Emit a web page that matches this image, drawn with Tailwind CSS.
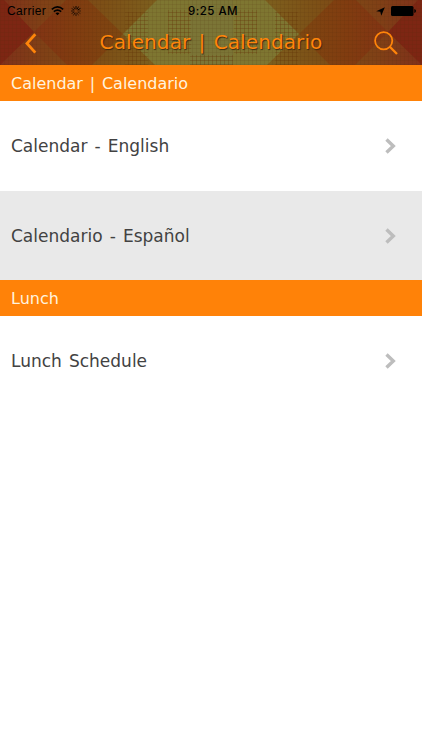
<!DOCTYPE html>
<html lang="en">
<head>
  <meta charset="UTF-8" />
  <meta name="viewport" content="width=device-width, initial-scale=1.0"/>
  <title>Calendar | Calendario</title>
  <script src="https://cdn.jsdelivr.net/npm/@tailwindcss/browser@4"></script>
</head>
<body class="bg-white min-h-screen overflow-hidden font-['DejaVu_Sans',sans-serif] text-[#424242]">
  <!-- Header -->
  <header class="relative h-[65px] overflow-hidden">
    <svg class="absolute inset-0" width="422" height="65" viewBox="0 0 422 65">
      <defs>
        <pattern id="weave" width="4" height="4" patternUnits="userSpaceOnUse">
          <path d="M0 .5H4M.5 0V4" stroke="#542c08" stroke-opacity=".1" fill="none"/>
        </pattern>
        <pattern id="grid" width="4" height="4" patternUnits="userSpaceOnUse">
          <path d="M0 .5H4M.5 0V4" stroke="#693607" stroke-opacity=".25" fill="none"/>
        </pattern>
        <linearGradient id="base">
          <stop offset="0" stop-color="#80301a"/>
          <stop offset=".1" stop-color="#804016"/>
          <stop offset=".25" stop-color="#7d5016"/>
          <stop offset=".36" stop-color="#7d5e1d"/>
          <stop offset=".5" stop-color="#7e702c"/>
          <stop offset=".64" stop-color="#7d5e1d"/>
          <stop offset=".75" stop-color="#7d5016"/>
          <stop offset=".9" stop-color="#804016"/>
          <stop offset="1" stop-color="#80301a"/>
        </linearGradient>
        <linearGradient id="left">
          <stop offset="0" stop-color="#823414"/>
          <stop offset=".45" stop-color="#813c10"/>
          <stop offset="1" stop-color="#7e4711"/>
        </linearGradient>
        <linearGradient id="right">
          <stop offset="0" stop-color="#7e4711"/>
          <stop offset=".55" stop-color="#813c10"/>
          <stop offset="1" stop-color="#823414"/>
        </linearGradient>
      </defs>
      <path d="M0 0H422V65H0Z" fill="url(#base)"/>
      <path d="M0 0H4L34 32L0 65Z M422 0H418L388 32L422 65Z" fill="#7d2613"/>
      <path d="M34 32L66 0H88L123 34L92 65H67Z" fill="url(#left)"/>
      <path d="M388 32L356 0H334L299 34L330 65H355Z" fill="url(#right)"/>
      <path d="M157 0H265L299 34L267 65H155L123 34Z" fill="#7e7631"/>
      <path d="M190 0H233V65H190Z" fill="#7b7536"/>
      <path d="M0 0H422V65H0Z" fill="url(#weave)"/>
      <path d="M125 12H148V65H125Z M168 10H191V54H168Z M234 10H257V54H234Z M190 55H233V65H190Z M275 12H298V65H275Z" fill="url(#grid)"/>
    </svg>

    <!-- Status bar -->
    <div class="relative flex h-[22px] items-center text-black">
      <div class="flex flex-1 items-center pl-[7px]">
        <span class="w-[45px] text-[12px] leading-[22px] font-['Liberation_Sans',sans-serif] tracking-[.35px]">Carrier</span>
        <svg class="-ml-px" width="13" height="10" viewBox="0 0 13 10" fill="none" stroke="#000" stroke-width="1.7">
          <path d="M.8 3.3Q6.5-1.5 12.2 3.3M2.8 5.6Q6.5 2.5 10.2 5.6"/>
          <path d="M4.5 7.2Q6.5 5.7 8.5 7.2L6.5 9.3Z" fill="#000" stroke="none"/>
        </svg>
        <svg class="ml-[7px]" width="10" height="10" viewBox="0 0 10 10" stroke="#000" stroke-width=".9" stroke-linecap="round">
          <path d="M5 .3V2.8M7.4.9L6.2 3M9.1 2.6L7 3.8"/>
          <path d="M9.7 5H7.2M9.1 7.4L7 6.2M7.4 9.1L6.2 7" opacity=".55"/>
          <path d="M5 9.7V7.2M2.6 9.1L3.8 7M.9 7.4L3 6.2M.3 5H2.8M.9 2.6L3 3.8M2.6.9L3.8 3" opacity=".75"/>
        </svg>
      </div>
      <span class="pl-[3px] text-[11.5px] font-medium leading-[22px] tracking-[.5px] font-['Inter','Liberation_Sans',sans-serif]">9:25 AM</span>
      <div class="flex flex-1 items-center justify-end pr-[6px]">
        <svg class="mr-[6px]" width="9" height="9" viewBox="0 0 9 9"><path d="M8.8.2L5.3 8.7L4.3 4.8L.2 4.2Z"/></svg>
        <svg width="25" height="10" viewBox="0 0 25 10"><rect width="22.5" height="10" rx="1.5"/><path d="M23.3 3.1Q25 3.5 25 5T23.3 6.9Z"/></svg>
      </div>
    </div>

    <!-- Title bar -->
    <div class="relative flex h-[43px] items-center justify-between pl-[25px] pr-[24px] text-[#ff850a]">
      <svg class="-mt-px" width="12" height="21" viewBox="0 0 12 21" fill="none" stroke="currentColor" stroke-width="2.8"><path d="M10.3 1.2L2 10.4L10.3 19.6"/></svg>
      <h1 class="ml-[11px] -mt-[3px] whitespace-nowrap text-[20px] leading-6 tracking-[.1px] [word-spacing:1.8px] [text-shadow:1px_1px_1px_#3c2a10]">Calendar | Calendario</h1>
      <svg class="-mt-px" width="24" height="24" viewBox="0 0 24 24" fill="none" stroke="currentColor" stroke-width="1.8"><circle cx="9.7" cy="9.7" r="8.6"/><path d="M15.8 15.8L23 23" stroke-width="2.3"/></svg>
    </div>
  </header>

  <!-- Menu -->
  <main class="[word-spacing:1.7px]">
    <h2 class="flex h-9 items-center bg-[#ff8208] pt-0.5 pl-[11px] text-base text-[#fff3df]">Calendar | Calendario</h2>
    <a class="flex h-[90px] items-center justify-between pl-[11px] pr-[26px] text-[17px]">
      <span class="pt-0.5">Calendar - English</span>
      <svg width="11" height="16" viewBox="0 0 11 16" fill="none" stroke="#bdbdbd" stroke-width="3.4"><path d="M1.5 1.5L8.3 8L1.5 14.5"/></svg>
    </a>
    <a class="flex h-[89px] items-center justify-between bg-[#e9e9e9] pl-[11px] pr-[26px] text-[17px]">
      <span class="pt-0.5">Calendario - Español</span>
      <svg width="11" height="16" viewBox="0 0 11 16" fill="none" stroke="#bdbdbd" stroke-width="3.4"><path d="M1.5 1.5L8.3 8L1.5 14.5"/></svg>
    </a>
    <h2 class="flex h-9 items-center bg-[#ff8208] pt-0.5 pl-[11px] text-base text-[#fff3df]">Lunch</h2>
    <a class="flex h-[90px] items-center justify-between pl-[11px] pr-[26px] text-[17px]">
      <span class="pt-0.5">Lunch Schedule</span>
      <svg width="11" height="16" viewBox="0 0 11 16" fill="none" stroke="#bdbdbd" stroke-width="3.4"><path d="M1.5 1.5L8.3 8L1.5 14.5"/></svg>
    </a>
  </main>
</body>
</html>
